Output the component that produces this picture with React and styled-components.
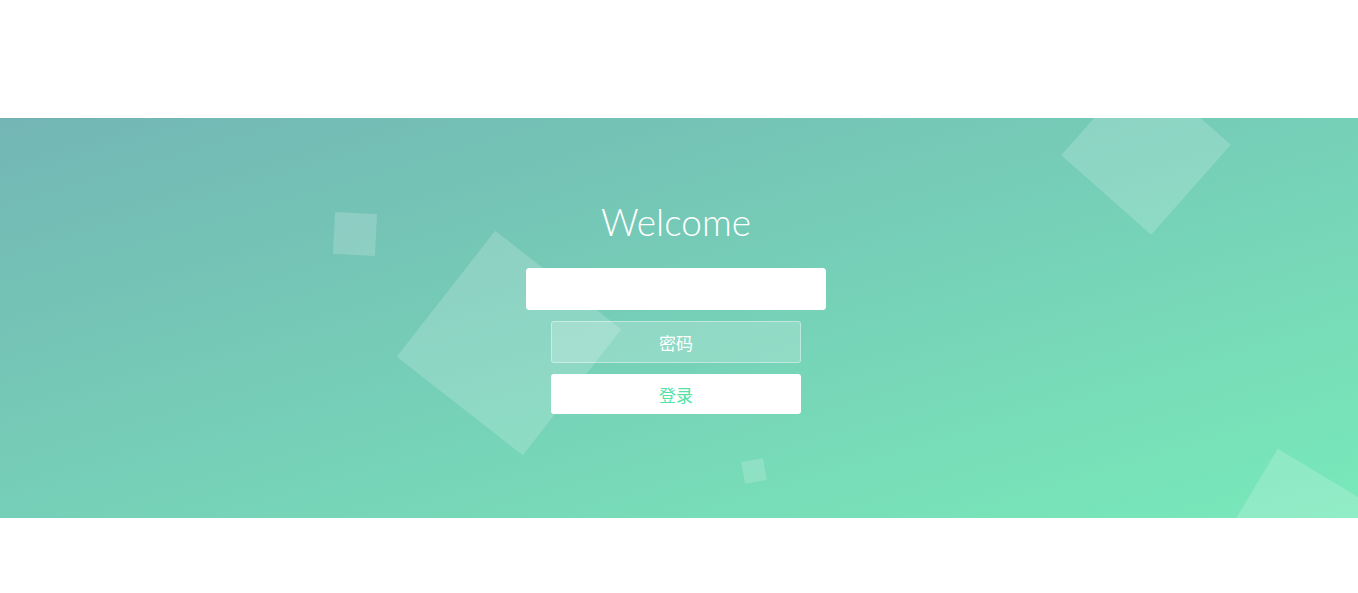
import styled, { createGlobalStyle } from "styled-components";

const GlobalStyle = createGlobalStyle`
  html, body {
    margin: 0;
    padding: 0;
    background: #ffffff;
    font-family: "Lato", "Noto Sans CJK SC", sans-serif;
  }
  * {
    box-sizing: border-box;
  }
`;

export default function App() {
  const bubbles = [
    { size: 42, left: 334, top: 95, rotate: 3 },
    { size: 160, left: 429, top: 145, rotate: 38 },
    { size: 120, left: 1086, top: -28, rotate: 41.5 },
    { size: 22, left: 743, top: 342, rotate: -10 },
    { size: 200, left: 1212, top: 368, rotate: 31 },
  ];

  return (
    <Page>
      <GlobalStyle />
      <Wrapper>
        {bubbles.map((b, i) => (
          <Bubble
            key={i}
            $size={b.size}
            $left={b.left}
            $top={b.top}
            $rotate={b.rotate}
          />
        ))}
        <Container>
          <Title>Welcome</Title>
          <Form onSubmit={(e) => e.preventDefault()}>
            <Input type='text' $focused />
            <Input type='password' placeholder='密码' />
            <LoginButton type='submit'>登录</LoginButton>
          </Form>
        </Container>
      </Wrapper>
    </Page>
  );
}

const Page = styled.div`
  width: 100%;
  padding-top: 118px;
`;

const Wrapper = styled.div`
  position: relative;
  width: 100%;
  height: 400px;
  overflow: hidden;
  background: #50a3a2;
  background: linear-gradient(
    to bottom right,
    rgba(80, 163, 162, 0.8) 0%,
    rgba(83, 227, 166, 0.78) 100%
  );
`;

const Bubble = styled.div`
  position: absolute;
  width: ${({ $size }) => $size}px;
  height: ${({ $size }) => $size}px;
  left: ${({ $left }) => $left}px;
  top: ${({ $top }) => $top}px;
  transform: rotate(${({ $rotate }) => $rotate}deg);
  background-color: rgba(255, 255, 255, 0.18);
`;

const Container = styled.div`
  position: relative;
  z-index: 2;
  padding: 80px 6px 0 0;
  display: flex;
  flex-direction: column;
  align-items: center;
`;

const Title = styled.h1`
  margin: 0 0 22px;
  font-family: "Lato", sans-serif;
  font-size: 37px;
  line-height: 48px;
  font-weight: 300;
  color: #ffffff;
`;

const Form = styled.form`
  display: flex;
  flex-direction: column;
  align-items: center;
  gap: 11px;
`;

const Input = styled.input`
  appearance: none;
  outline: 0;
  display: block;
  width: ${({ $focused }) => ($focused ? "300px" : "250px")};
  height: 42px;
  padding: 10px 15px;
  border: 1px solid
    ${({ $focused }) => ($focused ? "#ffffff" : "rgba(255, 255, 255, 0.4)")};
  border-radius: 3px;
  background-color: ${({ $focused }) =>
    $focused ? "#ffffff" : "rgba(255, 255, 255, 0.2)"};
  text-align: center;
  font-family: "Noto Sans CJK SC", sans-serif;
  font-size: 17px;
  color: ${({ $focused }) => ($focused ? "#53e3a6" : "#ffffff")};

  &::placeholder {
    color: #ffffff;
    opacity: 1;
  }
`;

const LoginButton = styled.button`
  appearance: none;
  outline: 0;
  width: 250px;
  height: 40px;
  padding: 0 15px;
  border: 0;
  border-radius: 3px;
  background-color: #ffffff;
  color: #53e3a6;
  font-family: "Noto Sans CJK SC", sans-serif;
  font-size: 17px;
  cursor: pointer;
`;
